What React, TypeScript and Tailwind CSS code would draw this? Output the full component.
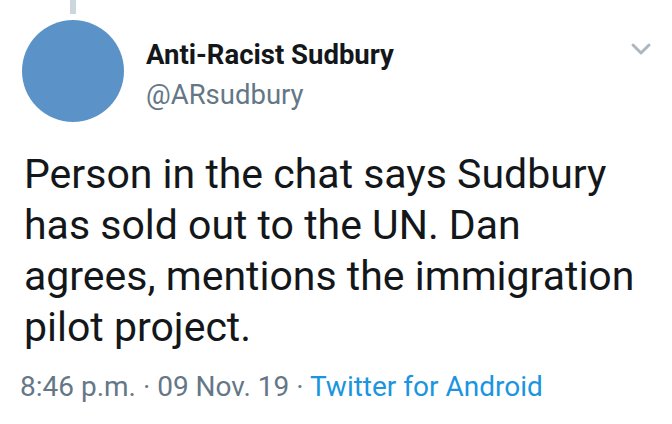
export default function App() {
  return (
    <div
      className="relative h-[424px] w-[672px] overflow-hidden bg-white text-[#14171a]"
      style={{ fontFamily: "Roboto, 'Noto Sans', sans-serif" }}
    >
      {/* thread line */}
      <div className="absolute left-[70px] top-0 h-[14px] w-[6px] bg-[#ccd6dd]" />

      <div className="flex pl-[22px] pr-[20px] pt-[20px]">
        <div className="h-[102px] w-[102px] shrink-0 rounded-full bg-[#5b93c9]" />
        <div className="ml-[22px] flex flex-1 flex-col pt-[20px]">
          <div className="text-[27.5px] font-bold leading-[30px]">Anti-Racist Sudbury</div>
          <div className="mt-[10px] text-[27.5px] leading-[30px] text-[#657786]">@ARsudbury</div>
        </div>
        <svg width="22" height="14" viewBox="0 0 22 14" className="mt-[22px] shrink-0">
          <path d="M3 3 L11 11 L19 3" fill="none" stroke="#aab8c2" strokeWidth="3" strokeLinecap="round" strokeLinejoin="round" />
        </svg>
      </div>

      <p className="mt-[27px] pl-[24px] pr-[30px] text-[41px] leading-[51px]">
        Person in the chat says Sudbury has sold out to the UN. Dan agrees, mentions the immigration pilot
        project.
      </p>

      <div className="mt-[18px] px-[20px] text-[28px] leading-[32px] text-[#657786]">
        8:46 p.m. · 09 Nov. 19 · <span className="text-[#1b95e0]">Twitter for Android</span>
      </div>
    </div>
  );
}
